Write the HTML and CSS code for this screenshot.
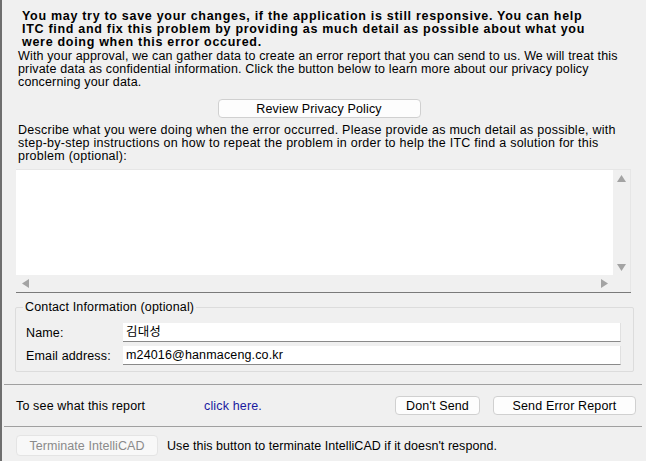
FILE: index.html
```html
<!DOCTYPE html>
<html lang="en">
<head>
    <meta charset="UTF-8">
    <title>IntelliCAD Error Report</title>
    <link rel="stylesheet" href="styles.css">
</head>
<body>
    <div class="dialog">
        <p class="lead">You may try to save your changes, if the application is still responsive. You can help<br>ITC find and fix this problem by providing as much detail as possible about what you<br>were doing when this error occured.</p>
        <p class="info">With your approval, we can gather data to create an error report that you can send to us. We will treat this<br>private data as confidential information. Click the button below to learn more about our privacy policy<br>concerning your data.</p>

        <div class="center-row">
            <button class="btn btn-privacy" type="button">Review Privacy Policy</button>
        </div>

        <p class="info describe">Describe what you were doing when the error occurred. Please provide as much detail as possible, with<br>step-by-step instructions on how to repeat the problem in order to help the ITC find a solution for this<br>problem (optional):</p>

        <!-- multi-line edit box with both scrollbars -->
        <div class="memo">
            <div class="memo-text"></div>
            <div class="vscroll">
                <svg width="9" height="7" viewBox="0 0 9 7"><path d="M0 7 L4.5 0 L9 7 Z" fill="#a3a3a3"/></svg>
                <svg width="9" height="7" viewBox="0 0 9 7"><path d="M0 0 L9 0 L4.5 7 Z" fill="#a3a3a3"/></svg>
            </div>
            <div class="hscroll">
                <svg width="7" height="9" viewBox="0 0 7 9"><path d="M7 0 L7 9 L0 4.5 Z" fill="#a3a3a3"/></svg>
                <svg width="7" height="9" viewBox="0 0 7 9"><path d="M0 0 L7 4.5 L0 9 Z" fill="#a3a3a3"/></svg>
            </div>
            <div class="corner"></div>
        </div>

        <fieldset class="contact">
            <legend>Contact Information (optional)</legend>
            <div class="field-row">
                <label>Name:</label>
                <div class="edit">김대성</div>
            </div>
            <div class="field-row">
                <label>Email address:</label>
                <div class="edit">m24016@hanmaceng.co.kr</div>
            </div>
        </fieldset>

        <div class="separator"></div>

        <div class="report-row">
            <span class="report-label">To see what this report</span>
            <span class="link">click here.</span>
            <button class="btn btn-dont" type="button">Don't Send</button>
            <button class="btn btn-send" type="button">Send Error Report</button>
        </div>

        <div class="separator"></div>

        <div class="terminate-row">
            <button class="btn btn-terminate" type="button" disabled>Terminate IntelliCAD</button>
            <span>Use this button to terminate IntelliCAD if it doesn't respond.</span>
        </div>
    </div>
</body>
</html>
```

FILE: styles.css
```css
/* Dialog base */
body {
    margin: 0;
    padding: 0;
    background: #f0f0f0;
    font-family: "Liberation Sans", "Noto Sans CJK KR", sans-serif;
    font-size: 12.5px;
    letter-spacing: 0.15px;
    color: #000;
}

.dialog {
    width: 644px;
    height: 461px;
    border-left: 2px solid #6e6e6e;
    padding-top: 10px;
    box-sizing: border-box;
    overflow: hidden;
}

p {
    margin: 0;
    white-space: nowrap;
}

.lead {
    font-weight: bold;
    font-size: 12.5px;
    letter-spacing: 0.7px;
    line-height: 13px;
    padding-left: 20px;
}

.info {
    line-height: 13px;
    padding-left: 16px;
    margin-top: 1px;
}

.center-row {
    display: flex;
    justify-content: center;
    margin-top: 10px;
    padding-right: 8px;
}

/* Push buttons */
.btn {
    font-family: inherit;
    font-size: 12.5px;
    letter-spacing: inherit;
    background: #fdfdfd;
    border: 1px solid #d0d0d0;
    border-radius: 4px;
    height: 19px;
    padding: 0;
    color: #000;
}

.btn-privacy {
    width: 203px;
}

.describe {
    margin-top: 6px;
    letter-spacing: 0.25px;
}

/* Edit box */
.memo {
    display: grid;
    grid-template-columns: 1fr 18px;
    grid-template-rows: 105px 17px;
    margin: 6px 13px 0 14px;
    border-top: 1px solid #e6e6e6;
    border-bottom: 1px solid #7a7a7a;
    background: #f0f0f0;
}

.memo-text {
    background: #fff;
}

.vscroll {
    display: flex;
    flex-direction: column;
    justify-content: space-between;
    align-items: center;
    padding: 5px 0 4px;
    border-right: 1px solid #e6e6e6;
}

.hscroll {
    display: flex;
    justify-content: space-between;
    align-items: center;
    padding: 0 5px 0 6px;
}

.corner {
    border-right: 1px solid #e6e6e6;
}

/* Contact group box */
.contact {
    margin: 7px 10px 0 13px;
    padding: 5px 12px 6px 10px;
    border: 1px solid #dcdcdc;
    border-radius: 2px;
}

.contact legend {
    padding: 0 2px;
    margin-left: -3px;
}

.field-row {
    display: flex;
    align-items: center;
    margin-top: 4px;
}

.field-row label {
    width: 97px;
    flex-shrink: 0;
}

.edit {
    flex: 1;
    height: 18px;
    line-height: 18px;
    background: #fff;
    border-bottom: 1px solid #8a8a8a;
    border-right: 1px solid #e0e0e0;
    padding-left: 3px;
}

.separator {
    height: 1px;
    background: #a0a0a0;
    margin: 12px 2px 0 2px;
}

/* Bottom rows */
.report-row {
    display: flex;
    align-items: center;
    height: 41px;
    padding-left: 14px;
}

.report-label {
    width: 188px;
}

.link {
    color: #1a1aa0;
}

.btn-dont {
    width: 85px;
    margin-left: auto;
}

.btn-send {
    width: 143px;
    margin: 0 8px 0 13px;
}

.report-row + .separator {
    margin-top: 0;
}

.terminate-row {
    display: flex;
    align-items: center;
    padding: 8px 0 0 14px;
    letter-spacing: 0.05px;
}

.btn-terminate {
    width: 142px;
    height: 21px;
    color: #8a8a8a;
    background: #f8f8f8;
    border-color: #e4e4e4;
    margin-right: 9px;
}
```
